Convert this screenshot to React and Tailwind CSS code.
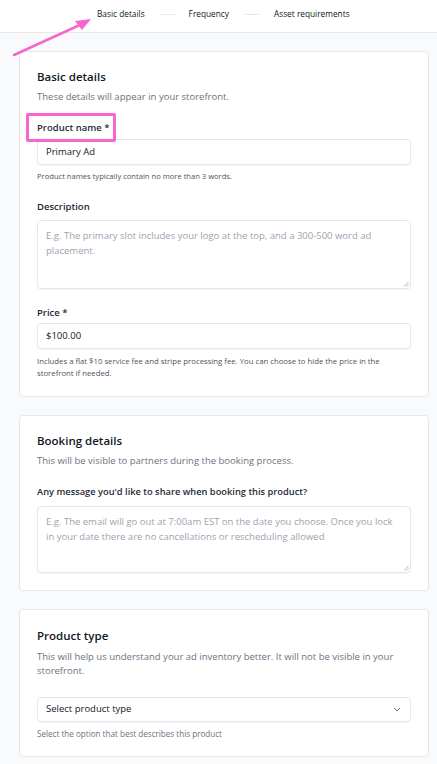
import React from "react";

function Label({ children, className = "" }) {
  return (
    <div className={`text-[9.5px] leading-[14px] font-semibold text-[#1f2937] ${className}`}>{children}</div>
  );
}

function Card({ children }) {
  return (
    <div className="bg-white border border-[#e5e7eb] rounded-[4px] pl-[17px] pr-[17px] pt-[17px] pb-[17px]">
      {children}
    </div>
  );
}

function Textarea({ placeholder, h }) {
  return (
    <div className={`relative border border-[#e5e7eb] rounded-[4px] shadow-[0_1px_1px_rgba(0,0,0,0.04)] px-[8px] pt-[7px] ${h}`}>
      <div className="text-[9.5px] leading-[15px] text-[#9ca3af]">{placeholder}</div>
      <svg className="absolute right-[1px] bottom-[1px]" width="6" height="6" viewBox="0 0 6 6">
        <path d="M5.5 1 L1 5.5 M5.5 3.5 L3.5 5.5" stroke="#9ca3af" strokeWidth="0.8" />
      </svg>
    </div>
  );
}

function Input({ value }) {
  return (
    <div className="h-[26px] border border-[#e5e7eb] rounded-[4px] shadow-[0_1px_1px_rgba(0,0,0,0.04)] px-[8px] flex items-center text-[9.5px] text-[#111827]">
      {value}
    </div>
  );
}

export default function App() {
  return (
    <div className="relative w-[437px] min-h-[764px] bg-[#f9fafb] font-['Open_Sans',sans-serif]">
      <div className="h-[33px] bg-white border-b border-[#e5e7eb] flex items-center pb-[4px]">
        <div className="flex items-center text-[8.3px] text-[#111827]">
          <span className="ml-[97px]">Basic details</span>
          <span className="ml-[16px] w-[14px] h-px bg-[#e5e7eb]"></span>
          <span className="ml-[14px]">Frequency</span>
          <span className="ml-[16px] w-[14px] h-px bg-[#e5e7eb]"></span>
          <span className="ml-[15px]">Asset requirements</span>
        </div>
      </div>

      <div className="pl-[19px] pr-[8px] pt-[18px] pb-[8px] flex flex-col gap-[18px]">
        <Card>
          <div className="text-[11.5px] leading-[16px] font-semibold text-[#111827]">Basic details</div>
          <div className="mt-[5px] text-[9.5px] leading-[14px] text-[#6b7280]">These details will appear in your storefront.</div>
          <div className="relative mt-[17px]">
            <Label>Product name *</Label>
            <div className="absolute left-[-11px] top-[-8px] w-[90px] h-[29px] border-[3px] border-[#f865d0] rounded-[2px]"></div>
          </div>
          <div className="mt-[4px]"><Input value="Primary Ad" /></div>
          <div className="mt-[6px] text-[7.6px] leading-[11px] text-[#4b5563]">Product names typically contain no more than 3 words.</div>
          <Label className="mt-[18px]">Description</Label>
          <div className="mt-[6px]">
            <Textarea h="h-[69px]" placeholder="E.g. The primary slot includes your logo at the top, and a 300-500 word ad placement." />
          </div>
          <Label className="mt-[17px]">Price *</Label>
          <div className="mt-[3px]"><Input value="$100.00" /></div>
          <div className="mt-[6px] text-[7.75px] leading-[12px] text-[#4b5563]">
            Includes a flat $10 service fee and stripe processing fee. You can choose to hide the price in the storefront if needed.
          </div>
        </Card>

        <Card>
          <div className="text-[11.5px] leading-[16px] font-semibold text-[#111827]">Booking details</div>
          <div className="mt-[5px] text-[9.5px] leading-[14px] text-[#6b7280]">This will be visible to partners during the booking process.</div>
          <div className="mt-[17px] text-[9.3px] leading-[14px] font-semibold text-[#1f2937]">Any message you'd like to share when booking this product?</div>
          <div className="mt-[7px]">
            <Textarea h="h-[67px]" placeholder="E.g. The email will go out at 7:00am EST on the date you choose. Once you lock in your date there are no cancellations or rescheduling allowed" />
          </div>
        </Card>

        <Card>
          <div className="mt-px text-[11.5px] leading-[16px] font-semibold text-[#111827]">Product type</div>
          <div className="mt-[6px] text-[9.5px] leading-[14px] text-[#6b7280]">
            This will help us understand your ad inventory better. It will not be visible in your storefront.
          </div>
          <div className="mt-[19px] h-[25px] border border-[#e5e7eb] rounded-[4px] shadow-[0_1px_1px_rgba(0,0,0,0.04)] pl-[8px] pr-[9px] flex items-center justify-between text-[9.5px] text-[#111827]">
            <span>Select product type</span>
            <svg width="8" height="5" viewBox="0 0 8 5">
              <path d="M1 1 L4 4 L7 1" fill="none" stroke="#6b7280" strokeWidth="1" />
            </svg>
          </div>
          <div className="mt-[6px] text-[8.1px] leading-[11px] text-[#6b7280]">Select the option that best describes this product</div>
        </Card>
      </div>

      <svg className="absolute left-0 top-0 pointer-events-none" width="100" height="60" viewBox="0 0 100 60">
        <line x1="14" y1="55" x2="82" y2="24" stroke="#f865d0" strokeWidth="2.5" strokeLinecap="round" />
        <polygon points="91,19 75,21 82,30" fill="#f865d0" />
      </svg>
    </div>
  );
}
